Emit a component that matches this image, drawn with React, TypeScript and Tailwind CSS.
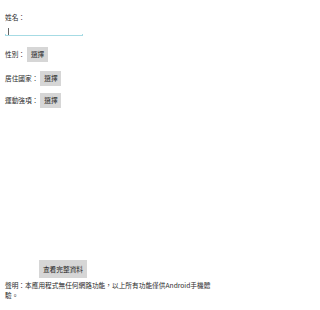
import React from "react";

const font = { fontFamily: '"Noto Sans CJK TC", "Noto Sans", sans-serif' };

function Btn({ children, className = "" }: { children: React.ReactNode; className?: string }) {
  return (
    <div
      className={`flex items-center justify-center bg-[#d6d6d6] text-[#1e1e1e] text-[6.7px] leading-none ${className}`}
    >
      {children}
    </div>
  );
}

export default function App() {
  return (
    <div
      className="w-[222px] h-[310px] bg-white text-[#2a2a2a] text-[6.7px] flex flex-col overflow-hidden"
      style={font}
    >
      <div className="pl-[5px] pt-[14px] leading-none">姓名：</div>
      <div className="ml-[5px] mt-[7px] w-[78px] h-[8px] relative">
        <div className="absolute left-[3px] top-0 w-px h-[7px] bg-[#666]" />
        <div className="absolute left-0 bottom-0 w-full h-px bg-[#a6dbe4]" />
        <div className="absolute left-0 bottom-0 w-px h-[2px] bg-[#a6dbe4]" />
        <div className="absolute right-0 bottom-0 w-px h-[2px] bg-[#a6dbe4]" />
      </div>
      <div className="flex items-center pl-[5px] mt-[11px]">
        <span className="leading-none">性別：</span>
        <Btn className="w-[21px] h-[15px] ml-[2px]">選擇</Btn>
      </div>
      <div className="flex items-center pl-[5px] mt-[9px]">
        <span className="leading-none">居住國家：</span>
        <Btn className="w-[21px] h-[15px] ml-[2px]">選擇</Btn>
      </div>
      <div className="flex items-center pl-[5px] mt-[7px]">
        <span className="leading-none">運動強項：</span>
        <Btn className="w-[21px] h-[15px] ml-[2px]">選擇</Btn>
      </div>
      <div className="flex-1" />
      <div className="pl-[39px]">
        <Btn className="w-[48px] h-[18px]">查看完整資料</Btn>
      </div>
      <div className="px-[5px] pt-[2px] pb-[10px] leading-[10px]">
        聲明：本應用程式無任何網路功能，以上所有功能僅供Android手機體驗。
      </div>
    </div>
  );
}
